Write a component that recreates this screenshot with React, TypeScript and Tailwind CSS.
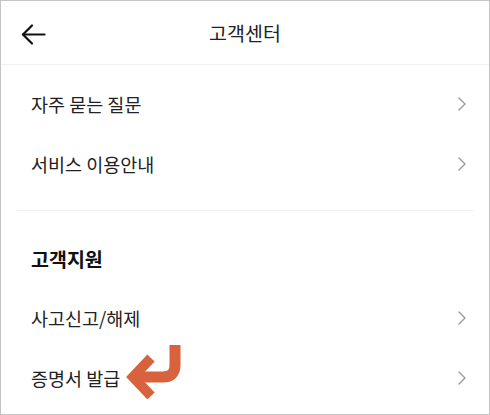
import React from 'react';

const FONT = '"Noto Sans CJK KR", "Noto Sans", sans-serif';

const Chevron = () => (
  <svg width="10" height="16" viewBox="0 0 10 16" fill="none" stroke="#9a9a9a" strokeWidth="1.4" strokeLinecap="round" strokeLinejoin="round">
    <path d="M2 2l6 6-6 6" />
  </svg>
);

const MenuRow = ({ label, children }: { label: string; children?: React.ReactNode }) => (
  <div className="relative flex h-[60px] items-center justify-between pl-[30px] pr-[22px]">
    <span className="text-[18.5px] leading-none text-[#222]">{label}</span>
    <Chevron />
    {children}
  </div>
);

const App: React.FC = () => {
  return (
    <div className="w-[490px] h-[415px] bg-white border border-[#c4c4c4] overflow-hidden" style={{ fontFamily: FONT }}>
      {/* header */}
      <div className="relative flex h-[64px] items-center justify-center border-b border-[#f0f0f0]">
        <button className="absolute left-[20px] top-[23px]">
          <svg width="25" height="21" viewBox="0 0 25 21" fill="none" stroke="#111" strokeWidth="2.2" strokeLinecap="round" strokeLinejoin="round">
            <path d="M2 10.5h21.5" />
            <path d="M11 1.5L2 10.5l9 9" />
          </svg>
        </button>
        <h1 className="text-[19.5px] leading-none text-[#222]">고객센터</h1>
      </div>

      <div className="pt-[9px]">
        <MenuRow label="자주 묻는 질문" />
        <MenuRow label="서비스 이용안내" />
      </div>

      <div className="mx-[16px] mt-[16px] border-t border-[#f0f0f0]" />

      <div className="flex h-[77px] items-center pl-[30px] pt-[18px]">
        <span className="text-[19.5px] font-bold leading-none text-[#111]">고객지원</span>
      </div>

      <MenuRow label="사고신고/해제" />
      <MenuRow label="증명서 발급">
        <svg className="absolute left-[122px] top-[-5px]" width="62" height="56" viewBox="0 0 62 56" fill="none" stroke="#d9623e">
          <path d="M52 2V22Q52 34 40 34H16" strokeWidth="11" />
          <path d="M28 15L10 34L28 53" strokeWidth="10" strokeLinejoin="miter" />
        </svg>
      </MenuRow>
    </div>
  );
};

export default App;
